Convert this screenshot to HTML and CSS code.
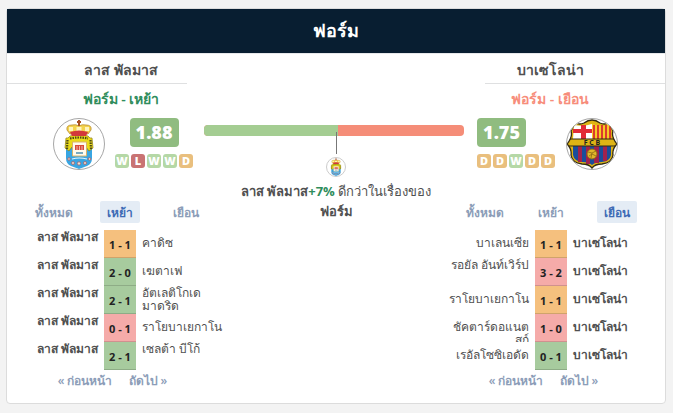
FILE: index.html
```html
<!DOCTYPE html>
<html lang="th">
<head>
<meta charset="utf-8">
<title>ฟอร์ม</title>
<link rel="stylesheet" href="styles.css">
</head>
<body>
<svg class="defs" width="0" height="0" aria-hidden="true">
  <symbol id="palmas" viewBox="1 1 50 50">
    <path d="M13 29h26v11q0 6-5 8l-8 3-8-3q-5-2-5-8z" fill="#38a5e2"/>
    <path d="M13 20q2 1 4-2 9-3 18 0 2 3 4 2l1 10-4 3-3-4H19l-3 4-4-3z" fill="#eadb18" stroke="#8d7d13" stroke-width=".7"/>
    <path d="M14.500 22l-.5 9M37.500 22l.5 9M17 20.500q9-2 18 0" fill="none" stroke="#4a471a" stroke-width="2.200" stroke-dasharray="1.500 1"/>
    <path d="M17 16l-3-4q-1-5 5-5 4-1 7 1 3-2 7-1 6 0 5 5l-3 4q-9-3-18 0z" fill="#f4d34d" stroke="#b98c2e" stroke-width=".8"/>
    <path d="M16 9h4v4h-4zM23.500 9h5v4h-5zM32 9h4v4h-4z" fill="#fff5bd"/>
    <path d="M17 14q9-3 18 0l-2 4H19z" fill="#d2383a"/>
    <path d="M26 2v6M24 4h4" stroke="#a95024" stroke-width="2"/>
    <path d="M19.500 24h14v14h-14z" fill="#fffbed" stroke="#d9b36a"/>
    <path d="M22 27h9v5h-9z" fill="#d94b3b"/>
    <path d="M24 28v4M26.500 28v4M29 28v4" stroke="#fff" stroke-width=".6"/>
    <path d="M23 35h7" stroke="#79aabf" stroke-width="2"/>
    <g fill="#e9e2d4" stroke="#a6606a" stroke-width=".8"><circle cx="16" cy="41" r="1.300"/><circle cx="20" cy="45" r="1.500"/><circle cx="26" cy="45.500" r="1.700"/><circle cx="32" cy="45" r="1.500"/><circle cx="36.500" cy="41" r="1.300"/></g>
    <path d="M19 41q7-2 15 0" fill="none" stroke="#e3f4fb" stroke-width="1.200"/>
  </symbol>
  <symbol id="barca" viewBox="1 1 50 50">
    <clipPath id="shield"><path d="M9 5q5 2 9 0 4-3 8-3t8 3q4 2 9 0l4 8q-2 6 4 13-5 5-4 11-1 8-11 9-7 0-10 4-3-4-10-4-10-1-11-9 1-6-4-11 6-7 4-13z"/></clipPath>
    <g clip-path="url(#shield)">
      <path d="M0 0h52v52H0z" fill="#dfb415"/>
      <path d="M8 7q10 2 18-1v15H7z" fill="#fff"/>
      <path d="M15 7h5v14h-5zM7 11h19v4H7z" fill="#e22c38"/>
      <path d="M26 6q8 3 18 1l1 14H26z" fill="#f6ca25"/>
      <path d="M28 7v14M32 7v14M36 7v14M40 7v14M44 8v13" stroke="#dc3b2d" stroke-width="2"/>
      <path d="M7 28h38v9q-1 6-9 7-7 0-10 3-3-3-10-3-8-1-9-7z" fill="#1a4d9b"/>
      <path d="M12 28h4v16h-4zM20 28h4v18h-4zM28 28h5v17h-5zM37 28h4v15h-4z" fill="#a0224e"/>
      <path d="M2 21h48M2 28h48" stroke="#312b17"/>
      <circle cx="26" cy="36" r="5" fill="#e2b82a" stroke="#8e6b15"/>
      <path d="M22 34l4 1 4-2M26 35l-1 5M23 38l3-2 4 2" stroke="#8e6b15" fill="none" stroke-width=".8"/>
    </g>
    <path d="M9 5q5 2 9 0 4-3 8-3t8 3q4 2 9 0l4 8q-2 6 4 13-5 5-4 11-1 8-11 9-7 0-10 4-3-4-10-4-10-1-11-9 1-6-4-11 6-7 4-13z" fill="none" stroke="#332b12" stroke-width="1.300"/>
    <text x="26" y="27" text-anchor="middle" class="crest-text">F C B</text>
  </symbol>
</svg>
<main class="card">
  <h2 class="card-title">ฟอร์ม</h2>
  <div class="columns">
    <section class="side home">
      <h3 class="team">ลาส พัลมาส</h3>
      <p class="form-title">ฟอร์ม - เหย้า</p>
      <div class="summary">
        <svg class="crest"><use href="#palmas"/></svg>
        <div class="rating">
          <strong class="ppg">1.88</strong>
          <div class="results"><span class="w">W</span><span class="l">L</span><span class="w">W</span><span class="w">W</span><span class="d">D</span></div>
        </div>
      </div>
      <div class="tabs"><button>ทั้งหมด</button><button class="active">เหย้า</button><button>เยือน</button></div>
      <table class="matches">
        <tr><td><div class="name own top">ลาส พัลมาส</div></td><td class="score draw">1 - 1</td><td><div class="name">คาดิซ</div></td></tr>
        <tr><td><div class="name own top">ลาส พัลมาส</div></td><td class="score win">2 - 0</td><td><div class="name">เฆตาเฟ</div></td></tr>
        <tr><td><div class="name own top">ลาส พัลมาส</div></td><td class="score win">2 - 1</td><td><div class="name top">อัตเลติโกเด<br>มาดริด</div></td></tr>
        <tr><td><div class="name own top">ลาส พัลมาส</div></td><td class="score loss">0 - 1</td><td><div class="name">ราโยบาเยกาโน</div></td></tr>
        <tr><td><div class="name own top">ลาส พัลมาส</div></td><td class="score win">2 - 1</td><td><div class="name top">เซลต้า บีโก้</div></td></tr>
      </table>
      <nav class="pager"><a href="#">« ก่อนหน้า</a><a href="#">ถัดไป »</a></nav>
    </section>
    <section class="compare">
      <div class="bar"><div class="bar-home"></div></div>
      <div class="marker"></div>
      <svg class="mini-crest"><use href="#palmas"/></svg>
      <p class="verdict"><b>ลาส พัลมาส<span class="plus">+7%</span></b> ดีกว่าในเรื่องของ <b>ฟอร์ม</b></p>
    </section>
    <section class="side away">
      <h3 class="team">บาเซโลน่า</h3>
      <p class="form-title">ฟอร์ม - เยือน</p>
      <div class="summary">
        <div class="rating">
          <strong class="ppg">1.75</strong>
          <div class="results"><span class="d">D</span><span class="d">D</span><span class="w">W</span><span class="d">D</span><span class="d">D</span></div>
        </div>
        <svg class="crest"><use href="#barca"/></svg>
      </div>
      <div class="tabs"><button>ทั้งหมด</button><button>เหย้า</button><button class="active">เยือน</button></div>
      <table class="matches">
        <tr><td><div class="name">บาเลนเซีย</div></td><td class="score draw">1 - 1</td><td><div class="name own">บาเซโลน่า</div></td></tr>
        <tr><td><div class="name top">รอยัล อันท์เวิร์ป</div></td><td class="score loss">3 - 2</td><td><div class="name own">บาเซโลน่า</div></td></tr>
        <tr><td><div class="name">ราโยบาเยกาโน</div></td><td class="score draw">1 - 1</td><td><div class="name own">บาเซโลน่า</div></td></tr>
        <tr><td><div class="name clipped">ชัคตาร์ดอแนต<br>สก์</div></td><td class="score loss">1 - 0</td><td><div class="name own">บาเซโลน่า</div></td></tr>
        <tr><td><div class="name">เรอัลโซซิเอดัด</div></td><td class="score win">0 - 1</td><td><div class="name own">บาเซโลน่า</div></td></tr>
      </table>
      <nav class="pager"><a href="#">« ก่อนหน้า</a><a href="#">ถัดไป »</a></nav>
    </section>
  </div>
</main>
</body>
</html>
```

FILE: styles.css
```css
* { box-sizing: border-box; }
body { margin: 0; padding: 8px 7px 8px 6px; background: #f3f3f3; color: #505050; font-family: "Open Sans", "Noto Sans", sans-serif; font-size: 12px; }
h2, h3, p { margin: 0; }
.defs { position: absolute; }
.card { background: #fff; border: 1px solid #dcdcdc; border-radius: 4px; padding-bottom: 12px; }
.card-title { height: 44px; line-height: 42px; background: #081e31; color: #fff; text-align: center; font-size: 18px; font-weight: 700; }
.columns { display: grid; grid-template-columns: 213px 1fr 213px; border-top: 1px solid #e6e8ea; }
.team { width: 180px; height: 30px; line-height: 32px; font-size: 14px; font-weight: 600; text-align: center; border-bottom: 1px solid #dfe0e1; }
.form-title { width: 180px; height: 34px; line-height: 30px; font-size: 14px; font-weight: 600; text-align: center; }
.home .team, .home .form-title { padding-left: 48px; }
.away .team, .away .form-title { padding-right: 50px; margin-left: auto; }
.home .form-title, .plus { color: #2f8d5c; }
.away .form-title { color: #f78d7b; }
.summary { display: flex; gap: 10px; height: 83px; }
.home .summary { padding-left: 46px; }
.away .summary { padding-right: 47px; justify-content: flex-end; }
.crest { width: 52px; height: 52px; border: 1px solid #a7a7a7; border-radius: 50%; }
.crest-text { font: 700 7px "Open Sans", sans-serif; fill: #222; }
.rating { display: flex; flex-direction: column; align-items: center; gap: 7px; width: 78px; }
.away .rating { align-items: flex-start; width: 79px; }
.ppg { width: 49px; height: 29px; line-height: 29px; border-radius: 4px; background: #90bc80; color: #fff; text-align: center; font-size: 18px; font-weight: 800; }
.results { display: flex; gap: 2px; }
.results span { width: 14px; height: 14px; line-height: 14px; border-radius: 3px; color: #fff; font-size: 11px; font-weight: 800; text-align: center; }
.w { background: #b5d8a6; }
.l { background: #c97373; }
.d { background: #e9bf7e; }
.tabs { display: grid; grid-template-columns: repeat(3, 66px); justify-items: center; width: 198px; margin-bottom: 7px; }
.home .tabs, .home .matches, .home .pager { margin-left: 14px; }
.tabs button { height: 22px; padding: 0 7px; border: 0; border-radius: 2px; background: none; color: #8c9db8; font: 600 12px "Open Sans", "Noto Sans", sans-serif; }
.tabs .active { background: #e4ecf5; color: #3e6bb5; }
.matches { width: 206px; table-layout: fixed; border-collapse: collapse; }
.matches td { height: 28px; padding: 0; vertical-align: top; }
.matches td:first-child { width: 83px; text-align: right; padding-right: 6px; }
.matches td:last-child { padding-left: 6px; }
.away .matches { margin-left: -8px; }
.away .matches td:first-child { width: 91px; }
.matches .score { width: 32px; vertical-align: middle; text-align: center; font-size: 11px; font-weight: 700; color: #222; box-shadow: inset 0 -1px rgba(0, 0, 0, .15); }
.draw { background: #f5c07e; }
.win { background: #a7cb9e; }
.loss { background: #f5aba9; }
.name { height: 28px; padding-top: 6px; line-height: 13px; white-space: nowrap; }
.name.top { padding-top: 0; }
.clipped { overflow: hidden; }
.own { font-weight: 700; }
.pager { display: flex; justify-content: center; gap: 16px; width: 183px; line-height: 21px; }
.pager a { color: #8c9db8; text-decoration: none; font-weight: 600; }
.compare { padding-top: 71px; display: flex; flex-direction: column; align-items: center; }
.bar { align-self: stretch; margin: 0 -12px 0 -16px; height: 11px; border-radius: 4px; background: #f58d78; overflow: hidden; }
.bar-home { width: 51.5%; height: 100%; background: #a4cd92; }
.marker { width: 1px; height: 22px; margin-top: -4px; background: #777; z-index: 1; }
.mini-crest { width: 20px; height: 20px; margin-top: 3px; border: 1px solid #ccc; border-radius: 50%; }
.verdict { width: 210px; margin-top: 4px; text-align: center; font-size: 13px; line-height: 20px; }
```
